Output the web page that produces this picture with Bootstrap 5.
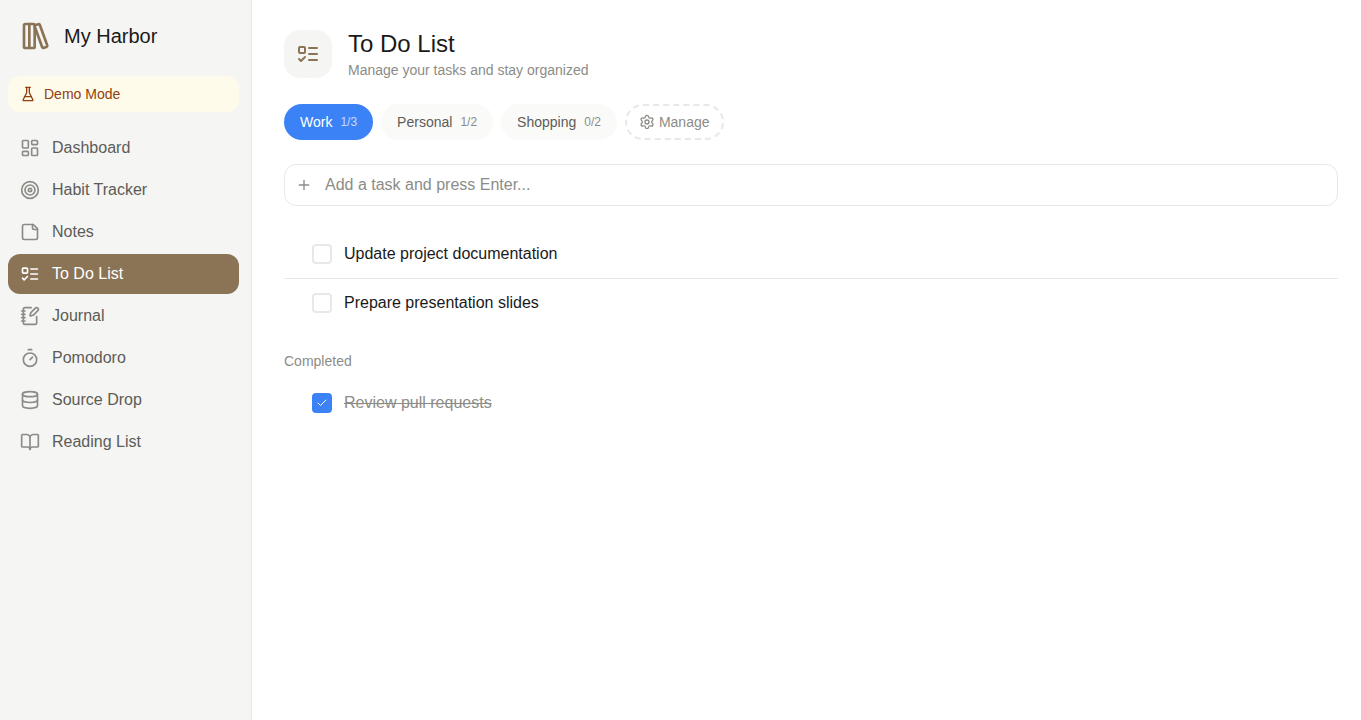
<!DOCTYPE html>
<html lang="en">
<head>
<meta charset="utf-8">
<meta name="viewport" content="width=device-width, initial-scale=1">
<title>My Harbor</title>
<link href="https://cdn.jsdelivr.net/npm/bootstrap@5.3.0/dist/css/bootstrap.min.css" rel="stylesheet">
<style>
  :root {
    --ink: #1a1a1a;
    --ink-soft: #5c5c58;
    --ink-muted: #8c8c87;
    --line: #e8e8e5;
    --surface: #f5f5f3;
    --brand: #8b7355;
    --accent: #3b82f6;
  }
  body { font-family: "Liberation Sans", Arial, sans-serif; color: var(--ink); background: #fff; }
  .ico { flex: none; fill: none; stroke: currentColor; stroke-width: 2; stroke-linecap: round; stroke-linejoin: round; }
  .text-soft { color: var(--ink-muted); }
  .fs-14 { font-size: 14px; line-height: 20px; }

  .sidebar { width: 252px; background: var(--surface); border-right: 1px solid var(--line); padding: 0 12px 0 8px; }
  .brand { height: 72px; padding: 0 12px; gap: 12px; font-size: 20px; line-height: 28px; color: var(--ink); }
  .brand .ico { color: var(--brand); }
  .demo { margin: 4px 0 16px; padding: 8px 12px; border-radius: 12px; background: #fffbeb; color: #92400e; }
  .side-nav { gap: 2px; }
  .side-nav .nav-link { display: flex; align-items: center; gap: 12px; height: 40px; padding: 0 12px; border-radius: 12px; color: var(--ink-soft); line-height: 24px; }
  .side-nav .nav-link .ico { color: var(--ink-muted); }
  .side-nav .nav-link.active, .side-nav .nav-link.active .ico { color: #fff; }
  .side-nav .nav-link.active { background: var(--brand); }
  .side-nav .nav-link span, .brand span { padding-bottom: 1px; }

  .page { padding: 28px 23px 28px 32px; }
  .page-icon { width: 48px; height: 48px; border-radius: 16px; background: var(--surface); color: var(--brand); }
  .page-title { font-size: 24px; line-height: 32px; font-weight: 400; }

  .pill { display: inline-flex; align-items: center; gap: 8px; height: 36px; padding: 0 16px; border: 0; border-radius: 18px; background: #fafaf9; color: var(--ink-soft); }
  .pill small { font-size: 12px; line-height: 16px; opacity: .7; }
  .pill.active { background: var(--accent); color: #fff; }
  .pill-manage { gap: 4px; padding: 0 12px; border: 2px dashed var(--line); background: none; color: var(--ink-muted); }

  .add-task .ico { left: 12px; }
  .add-task .form-control { height: 42px; padding: 8px 12px 8px 40px; border-color: var(--line); border-radius: 12px; color: var(--ink); }
  .add-task .form-control::placeholder { color: var(--ink-muted); }

  .task { display: flex; align-items: center; gap: 12px; height: 48px; padding: 0 28px; }
  .task + .task { border-top: 1px solid var(--line); height: 49px; }
  .task .form-check-input { flex: none; width: 20px; height: 20px; margin: 0; border: 2px solid var(--line); border-radius: 4px; }
  .task .form-check-input:checked { border-color: var(--accent); background-color: var(--accent); background-size: 12px 12px;
    background-image: url("data:image/svg+xml,%3csvg xmlns='http://www.w3.org/2000/svg' viewBox='0 0 24 24' fill='none' stroke='%23fff' stroke-width='2' stroke-linecap='round' stroke-linejoin='round'%3e%3cpath d='M20 6 9 17l-5-5'/%3e%3c/svg%3e"); }
</style>
</head>
<body>
<div class="d-flex min-vh-100">
  <aside class="sidebar flex-shrink-0">
    <a href="#" class="brand d-flex align-items-center text-decoration-none">
      <svg class="ico" width="32" height="32" viewBox="0 0 24 24" aria-hidden="true"><rect width="8" height="18" x="3" y="3" rx="1"/><path d="M7 3v18"/><path d="M20.4 18.9c.2.5-.1 1.1-.6 1.3l-1.9.7c-.5.2-1.1-.1-1.3-.6L11.1 5.1c-.2-.5.1-1.1.6-1.3l1.9-.7c.5-.2 1.1.1 1.3.6Z"/></svg>
      <span>My Harbor</span>
    </a>
    <div class="demo d-flex align-items-center gap-2 fs-14">
      <svg class="ico" width="16" height="16" viewBox="0 0 24 24" aria-hidden="true"><path d="M10 2v7.527a2 2 0 0 1-.211.896L4.72 20.55a1 1 0 0 0 .9 1.45h12.76a1 1 0 0 0 .9-1.45l-5.069-10.127A2 2 0 0 1 14 9.527V2"/><path d="M8.5 2h7"/><path d="M7 16h10"/></svg>
      <span>Demo Mode</span>
    </div>
    <nav class="side-nav nav flex-column" aria-label="Main">
      <a class="nav-link" href="#"><svg class="ico" width="20" height="20" viewBox="0 0 24 24" aria-hidden="true"><rect width="7" height="9" x="3" y="3" rx="1"/><rect width="7" height="5" x="14" y="3" rx="1"/><rect width="7" height="9" x="14" y="12" rx="1"/><rect width="7" height="5" x="3" y="16" rx="1"/></svg><span>Dashboard</span></a>
      <a class="nav-link" href="#"><svg class="ico" width="20" height="20" viewBox="0 0 24 24" aria-hidden="true"><circle cx="12" cy="12" r="10"/><circle cx="12" cy="12" r="6"/><circle cx="12" cy="12" r="2"/></svg><span>Habit Tracker</span></a>
      <a class="nav-link" href="#"><svg class="ico" width="20" height="20" viewBox="0 0 24 24" aria-hidden="true"><path d="M16 3H5a2 2 0 0 0-2 2v14a2 2 0 0 0 2 2h14a2 2 0 0 0 2-2V8Z"/><path d="M15 3v4a2 2 0 0 0 2 2h4"/></svg><span>Notes</span></a>
      <a class="nav-link active" aria-current="page" href="#"><svg class="ico" width="20" height="20" viewBox="0 0 24 24" aria-hidden="true"><rect x="3" y="5" width="6" height="6" rx="1"/><path d="m3 17 2 2 4-4"/><path d="M13 6h8"/><path d="M13 12h8"/><path d="M13 18h8"/></svg><span>To Do List</span></a>
      <a class="nav-link" href="#"><svg class="ico" width="20" height="20" viewBox="0 0 24 24" aria-hidden="true"><path d="M13.4 2H6a2 2 0 0 0-2 2v16a2 2 0 0 0 2 2h12a2 2 0 0 0 2-2v-7.4"/><path d="M2 6h4"/><path d="M2 10h4"/><path d="M2 14h4"/><path d="M2 18h4"/><path d="M21.378 5.626a1 1 0 1 0-3.004-3.004l-5.01 5.012a2 2 0 0 0-.506.854l-.837 2.87a.5.5 0 0 0 .62.62l2.87-.837a2 2 0 0 0 .854-.506z"/></svg><span>Journal</span></a>
      <a class="nav-link" href="#"><svg class="ico" width="20" height="20" viewBox="0 0 24 24" aria-hidden="true"><path d="M10 2h4"/><path d="m12 14 3-3"/><circle cx="12" cy="14" r="8"/></svg><span>Pomodoro</span></a>
      <a class="nav-link" href="#"><svg class="ico" width="20" height="20" viewBox="0 0 24 24" aria-hidden="true"><ellipse cx="12" cy="5" rx="9" ry="3"/><path d="M3 5V19A9 3 0 0 0 21 19V5"/><path d="M3 12A9 3 0 0 0 21 12"/></svg><span>Source Drop</span></a>
      <a class="nav-link" href="#"><svg class="ico" width="20" height="20" viewBox="0 0 24 24" aria-hidden="true"><path d="M12 7v14"/><path d="M3 18a1 1 0 0 1-1-1V4a1 1 0 0 1 1-1h5a4 4 0 0 1 4 4 4 4 0 0 1 4-4h5a1 1 0 0 1 1 1v13a1 1 0 0 1-1 1h-6a3 3 0 0 0-3 3 3 3 0 0 0-3-3z"/></svg><span>Reading List</span></a>
    </nav>
  </aside>

  <main class="page flex-grow-1">
    <header class="d-flex align-items-center gap-3 mb-4">
      <div class="page-icon d-flex align-items-center justify-content-center flex-shrink-0">
        <svg class="ico" width="24" height="24" viewBox="0 0 24 24" aria-hidden="true"><rect x="3" y="5" width="6" height="6" rx="1"/><path d="m3 17 2 2 4-4"/><path d="M13 6h8"/><path d="M13 12h8"/><path d="M13 18h8"/></svg>
      </div>
      <div>
        <h1 class="page-title mb-0">To Do List</h1>
        <p class="fs-14 text-soft mb-0">Manage your tasks and stay organized</p>
      </div>
    </header>

    <div class="d-flex flex-wrap gap-2 mb-4">
      <button type="button" class="pill fs-14 active" aria-pressed="true">Work <small>1/3</small></button>
      <button type="button" class="pill fs-14">Personal <small>1/2</small></button>
      <button type="button" class="pill fs-14">Shopping <small>0/2</small></button>
      <button type="button" class="pill pill-manage fs-14"><svg class="ico" width="16" height="16" viewBox="0 0 24 24" aria-hidden="true"><path d="M9.671 4.136a2.34 2.34 0 0 1 4.659 0 2.34 2.34 0 0 0 3.319 1.915 2.34 2.34 0 0 1 2.33 4.033 2.34 2.34 0 0 0 0 3.831 2.34 2.34 0 0 1-2.33 4.033 2.34 2.34 0 0 0-3.319 1.915 2.34 2.34 0 0 1-4.659 0 2.34 2.34 0 0 0-3.32-1.915 2.34 2.34 0 0 1-2.33-4.033 2.34 2.34 0 0 0 0-3.831A2.34 2.34 0 0 1 6.35 6.051a2.34 2.34 0 0 0 3.319-1.915"/><circle cx="12" cy="12" r="3"/></svg>Manage</button>
    </div>

    <form class="add-task position-relative mb-4">
      <svg class="ico text-soft position-absolute top-50 translate-middle-y" width="16" height="16" viewBox="0 0 24 24" aria-hidden="true"><path d="M5 12h14"/><path d="M12 5v14"/></svg>
      <input type="text" class="form-control" placeholder="Add a task and press Enter..." aria-label="Add a task">
    </form>

    <ul class="list-unstyled mb-4">
      <li class="task"><input class="form-check-input" type="checkbox" id="task-docs"><label for="task-docs">Update project documentation</label></li>
      <li class="task"><input class="form-check-input" type="checkbox" id="task-slides"><label for="task-slides">Prepare presentation slides</label></li>
    </ul>

    <h2 class="fs-14 fw-normal text-soft mb-2">Completed</h2>
    <ul class="list-unstyled mb-0">
      <li class="task"><input class="form-check-input" type="checkbox" id="task-review" checked><label for="task-review" class="text-soft text-decoration-line-through">Review pull requests</label></li>
    </ul>
  </main>
</div>
<script src="https://cdn.jsdelivr.net/npm/bootstrap@5.3.0/dist/js/bootstrap.bundle.min.js"></script>
</body>
</html>
